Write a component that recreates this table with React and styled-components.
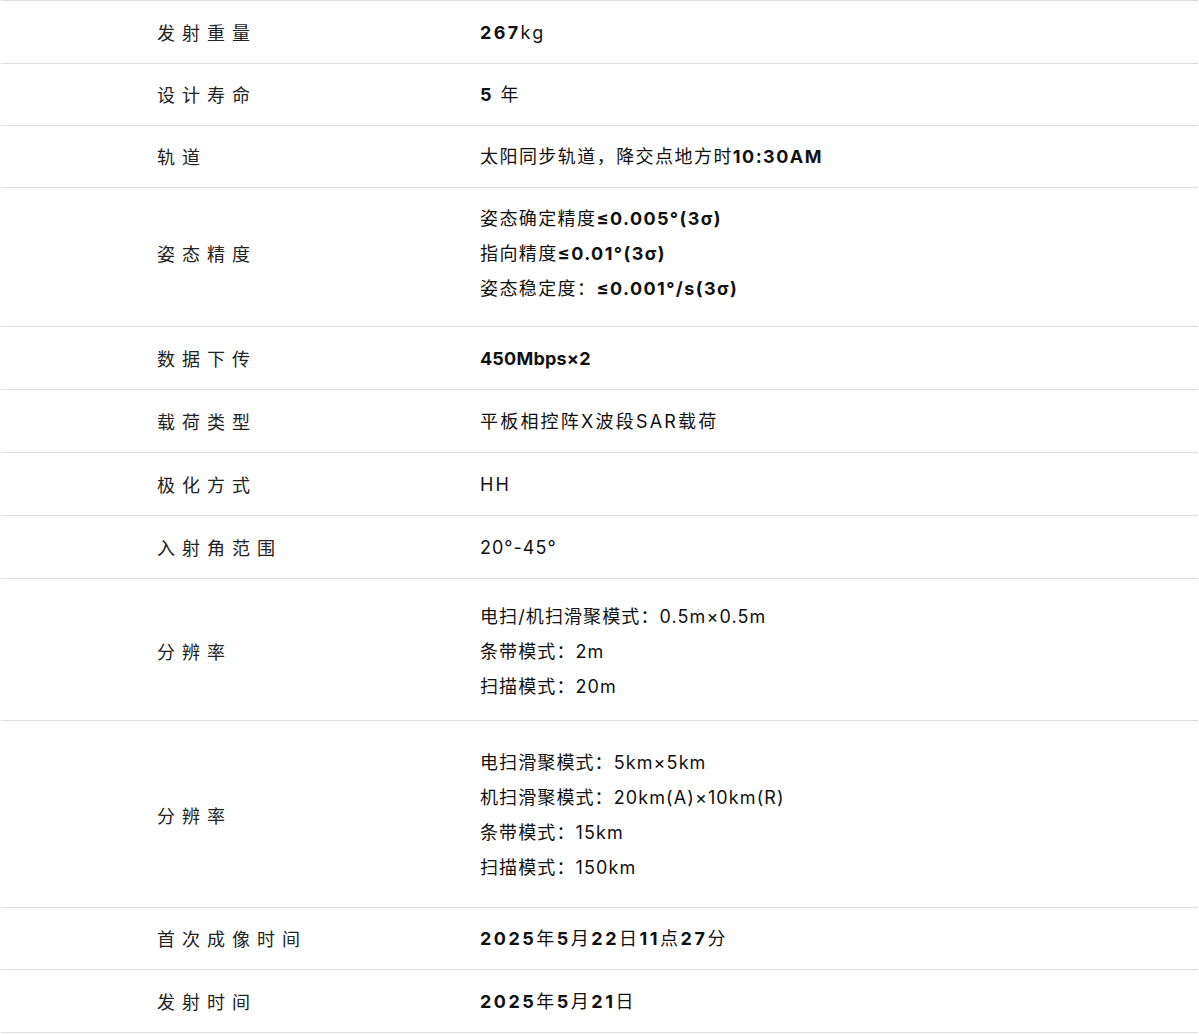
import React from "react";
import styled, { createGlobalStyle } from "styled-components";

const Global = createGlobalStyle`
  html, body { margin: 0; padding: 0; background: #fff; }
  body { font-family: Inter, "Noto Sans CJK SC", sans-serif; color: #111; }
`;

const Table = styled.div`
  margin: 0 1px;
  border-top: 1px solid #dedede;
`;

const Row = styled.div`
  display: grid;
  grid-template-columns: 479px 1fr;
  align-items: center;
  border-bottom: 1px solid #dedede;
  padding: ${(p) => p.$top}px 0 ${(p) => p.$bottom}px;
`;

const Label = styled.div`
  padding-left: 156px;
  font-size: 18px;
  letter-spacing: 7px;
  color: #222;
  line-height: 35px;
  font-family: "Noto Sans CJK SC", sans-serif;
`;

const Value = styled.div`
  font-size: 18px;
  line-height: 35px;
  color: #111;
  letter-spacing: ${(p) => p.$ls}px;
`;

const Line = styled.div``;

const B = styled.b`
  font-weight: 700;
`;

const rows = [
  { label: "发射重量", top: 13.5, bottom: 13.5, ls: 2.3, lines: [<><B>267</B>kg</>] },
  { label: "设计寿命", top: 13, bottom: 13, ls: 2, lines: [<><B>5</B> 年</>] },
  { label: "轨道", top: 13, bottom: 13, ls: 1.45, lines: [<>太阳同步轨道，降交点地方时<B>10:30AM</B></>] },
  {
    label: "姿态精度",
    top: 13,
    bottom: 20,
    ls: 1.4,
    lines: [
      <>姿态确定精度<B>≤0.005°(3σ)</B></>,
      <>指向精度<B>≤0.01°(3σ)</B></>,
      <>姿态稳定度：<B>≤0.001°/s(3σ)</B></>,
    ],
  },
  { label: "数据下传", top: 13.5, bottom: 13.5, ls: 0.2, lines: [<B>450Mbps×2</B>] },
  { label: "载荷类型", top: 13.5, bottom: 13.5, ls: 2.2, lines: ["平板相控阵X波段SAR载荷"] },
  { label: "极化方式", top: 13.5, bottom: 13.5, ls: 2, lines: ["HH"] },
  { label: "入射角范围", top: 13.5, bottom: 13.5, ls: 1, lines: ["20°-45°"] },
  {
    label: "分辨率",
    top: 20,
    bottom: 16,
    ls: 1.1,
    lines: ["电扫/机扫滑聚模式：0.5m×0.5m", "条带模式：2m", "扫描模式：20m"],
  },
  {
    label: "分辨率",
    top: 24,
    bottom: 22,
    ls: 1.1,
    lines: [
      "电扫滑聚模式：5km×5km",
      "机扫滑聚模式：20km(A)×10km(R)",
      "条带模式：15km",
      "扫描模式：150km",
    ],
  },
  {
    label: "首次成像时间",
    top: 13,
    bottom: 13,
    ls: 2.5,
    lines: [<><B>2025</B>年<B>5</B>月<B>22</B>日<B>11</B>点<B>27</B>分</>],
  },
  {
    label: "发射时间",
    top: 13.5,
    bottom: 13.5,
    ls: 2.5,
    lines: [<><B>2025</B>年<B>5</B>月<B>21</B>日</>],
  },
];

export default function App() {
  return (
    <>
      <Global />
      <Table>
        {rows.map((r, i) => (
          <Row key={i} $top={r.top} $bottom={r.bottom}>
            <Label>{r.label}</Label>
            <Value $ls={r.ls}>
              {r.lines.map((l, j) => (
                <Line key={j}>{l}</Line>
              ))}
            </Value>
          </Row>
        ))}
      </Table>
    </>
  );
}
